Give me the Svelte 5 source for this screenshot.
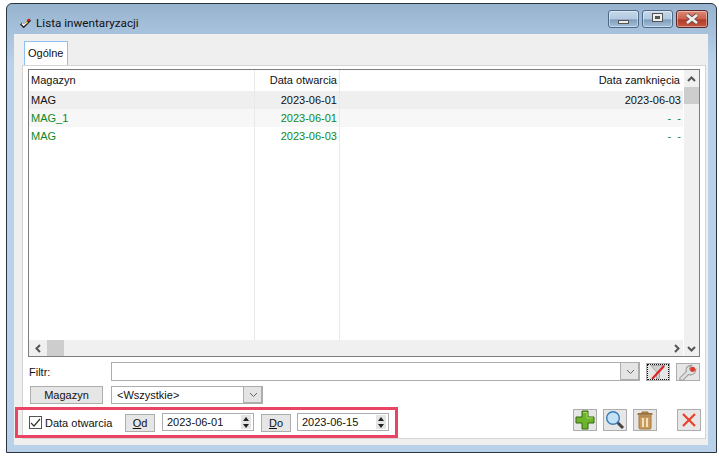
<script>
	const rows = [
		{ name: 'MAG', open: '2023-06-01', close: '2023-06-03', cls: 'selected' },
		{ name: 'MAG_1', open: '2023-06-01', close: '-  -', cls: 'green alt' },
		{ name: 'MAG', open: '2023-06-03', close: '-  -', cls: 'green' }
	];
</script>

<div class="window">
	<div class="titlebar">
		<svg class="app-icon" width="12" height="11" viewBox="0 0 13 12">
			<path d="M1 6l3 3 7-7" fill="none" stroke="#222" stroke-width="3" />
			<path d="M2 6l2 2 4-4" fill="none" stroke="#fff" stroke-width="1.500" />
			<rect x="8" y="1" width="3" height="2.500" fill="#d81818" />
			<rect x="6" y="4" width="2" height="2" fill="#e8c020" />
		</svg>
		<span class="title">Lista inwentaryzacji</span>
		<div class="controls">
			<div class="ctl">
				<span class="min-glyph"></span>
			</div>
			<div class="ctl">
				<span class="max-glyph"></span>
			</div>
			<div class="ctl close">
				<svg width="18" height="12" viewBox="0 0 18 12">
					<path d="M4 2l10 8M14 2L4 10" stroke="#6b4a48" stroke-width="4.400" />
					<path d="M4 2l10 8M14 2L4 10" stroke="#f0f0f0" stroke-width="2.800" />
				</svg>
			</div>
		</div>
	</div>

	<div class="client">
		<div class="tabs"><div class="tab">Ogólne</div></div>
		<div class="panel">
			<div class="grid">
				<div class="table">
					<div class="head">
						<div class="c1">Magazyn</div>
						<div class="c2">Data otwarcia</div>
						<div class="c3">Data zamknięcia</div>
					</div>
					{#each rows as r}
						<div class="row {r.cls}">
							<div class="c1">{r.name}</div>
							<div class="c2">{r.open}</div>
							<div class="c3">{r.close}</div>
						</div>
					{/each}
					<div class="fill">
						<div class="c1"></div>
						<div class="c2"></div>
						<div class="c3"></div>
					</div>
					<div class="hscroll">
						<svg class="arrow" width="9" height="9" viewBox="0 0 9 9"><path d="M6 1L2.500 4.500 6 8" fill="none" stroke="#555" stroke-width="2" /></svg>
						<div class="hthumb"></div>
						<svg class="arrow right" width="9" height="9" viewBox="0 0 9 9"><path d="M3 1l3.500 3.500L3 8" fill="none" stroke="#555" stroke-width="2" /></svg>
					</div>
				</div>
				<div class="vscroll">
					<svg class="arrow-v" width="9" height="9" viewBox="0 0 9 9"><path d="M1 6l3.500-3.500L8 6" fill="none" stroke="#555" stroke-width="2" /></svg>
					<div class="vthumb"></div>
					<svg class="arrow-v bottom" width="9" height="9" viewBox="0 0 9 9"><path d="M1 3l3.500 3.500L8 3" fill="none" stroke="#555" stroke-width="2" /></svg>
				</div>
			</div>

			<div class="filter-row">
				<span class="filter-label">Filtr:</span>
				<div class="combo filter-combo">
					<div class="combo-text"></div>
					<div class="combo-btn">
						<svg width="9" height="6" viewBox="0 0 9 6"><path d="M1 1l3.500 3.500L8 1" fill="none" stroke="#666" /></svg>
					</div>
				</div>
				<button class="icon-btn focus">
					<span class="dots">
						<svg width="18" height="14" viewBox="0 0 18 14">
							<path d="M2 0.500h14L10.500 7v6l-3 1V7z" fill="#cfcfcf" stroke="#a8a8a8" />
							<path d="M3 14L15 1" stroke="#e02424" stroke-width="2.200" />
						</svg>
					</span>
				</button>
				<button class="icon-btn wrench">
					<svg width="21" height="17" viewBox="0 0 20 16">
						<path d="M2 13l6-6c-1-3 1-6 5-6l-2 3c0 2 2 3 3 3l3-2c0 4-3 6-7 5l-5 5c-2 1-4 0-3-2z" fill="#e0e0e0" stroke="#999" />
						<circle cx="14" cy="5" r="2.400" fill="#e03a2a" />
					</svg>
				</button>
			</div>

			<div class="mag-row">
				<button class="btn mag-btn">Magazyn</button>
				<div class="combo mag-combo">
					<div class="combo-text">&lt;Wszystkie&gt;</div>
					<div class="combo-btn">
						<svg width="9" height="6" viewBox="0 0 9 6"><path d="M1 1l3.500 3.500L8 1" fill="none" stroke="#666" /></svg>
					</div>
				</div>
			</div>

			<div class="bottom-row">
				<div class="date-box">
					<span class="check">
						<svg width="11" height="10" viewBox="0 0 11 10"><path d="M1 5l3 3 6-7" fill="none" stroke="#333" stroke-width="1.200" /></svg>
					</span>
					<span class="check-label">Data otwarcia</span>
					<button class="btn small od"><u>O</u>d</button>
					<div class="date">
						<span>2023-06-01</span>
						<div class="spin"><i class="up"></i><i class="down"></i></div>
					</div>
					<button class="btn small do"><u>D</u>o</button>
					<div class="date">
						<span>2023-06-15</span>
						<div class="spin"><i class="up"></i><i class="down"></i></div>
					</div>
				</div>
				<div class="actions">
					<button class="icon-btn act">
						<svg width="20" height="20" viewBox="0 0 20 20">
							<path d="M7 1h6v6h6v6h-6v6H7v-6H1V7h6z" fill="#6cb52a" stroke="#35660f" />
							<path d="M8 2.500h4V8h6" fill="none" stroke="#a6dc60" />
						</svg>
					</button>
					<button class="icon-btn act">
						<svg width="20" height="20" viewBox="0 0 20 20">
							<path d="M12 12l6 6" stroke="#444" stroke-width="3" />
							<circle cx="8" cy="8" r="6.300" fill="#c4e2f7" stroke="#3a7cb5" stroke-width="1.400" />
						</svg>
					</button>
					<button class="icon-btn act">
						<svg width="18" height="20" viewBox="0 0 18 20">
							<path d="M2 3.500h14V5H2zM6 3.500V2h6v1.500" fill="#b98a4c" stroke="#9a713a" />
							<path d="M3 6h12v12a1 1 0 0 1-1 1H4a1 1 0 0 1-1-1z" fill="#c99a5b" stroke="#a07a42" />
							<rect x="6" y="8" width="2" height="9" fill="#f0e0c0" />
							<rect x="10" y="8" width="2" height="9" fill="#f0e0c0" />
						</svg>
					</button>
					<button class="icon-btn act cancel">
						<svg width="16" height="16" viewBox="0 0 16 16">
							<path d="M2 2l12 12M14 2L2 14" stroke="#e8402a" stroke-width="2.200" />
						</svg>
					</button>
				</div>
			</div>
		</div>
	</div>
</div>

<style>
	:global(body) {
		background: #fff;
		font-family: 'Liberation Sans', Arial, sans-serif;
		font-size: 11px;
		color: #111;
	}
	.window {
		box-sizing: border-box;
		width: 711px;
		height: 450px;
		margin: 3px 0 0 6px;
		border: 1px solid #2a3540;
		border-radius: 6px 6px 0 0;
		background: linear-gradient(#97b3cf 0, #b9d2ea 60px, #b9d2ea 100%);
		display: flex;
		flex-direction: column;
		padding: 0 7px 7px;
	}
	.titlebar {
		height: 30px;
		display: flex;
		align-items: center;
		flex: none;
		margin-right: 1px;
		padding-top: 8px;
		box-sizing: border-box;
	}
	.app-icon {
		margin: 0 4px 0 6px;
	}
	.title {
		font-family: Roboto, sans-serif;
		font-size: 11.7px;
		color: #111;
	}
	.controls {
		margin-left: auto;
		display: flex;
		gap: 3px;
		margin-top: -8px;
	}
	.ctl {
		box-sizing: border-box;
		width: 31px;
		height: 18px;
		border: 1px solid #4f6a88;
		border-radius: 3px;
		background: linear-gradient(#c6d8ea 0, #b2c9e0 50%, #7f9dbc 55%, #a6c0da 100%);
		display: flex;
		align-items: center;
		justify-content: center;
		box-shadow: inset 0 0 0 1px rgba(255, 255, 255, 0.4);
	}
	.close {
		width: 32px;
		border-color: #5a2a2a;
		background: linear-gradient(#dc8a78 0, #c9604c 50%, #b03a28 55%, #c65a44 100%);
	}
	.min-glyph {
		width: 9px;
		height: 2px;
		background: #eee;
		border: 1px solid #555;
		margin-top: 5px;
	}
	.max-glyph {
		box-sizing: border-box;
		width: 11px;
		height: 9px;
		border: 3px solid #eee;
		outline: 1px solid #555;
		outline-offset: -1px;
		background: #555;
		margin-top: -3px;
	}
	.client {
		flex: 1;
		background: #efefef;
		display: flex;
		flex-direction: column;
		padding: 7px 2px 6px 8px;
		margin-right: 1px;
		min-height: 0;
	}
	.tabs {
		display: flex;
		flex: none;
		padding-left: 2px;
	}
	.tab {
		height: 24px;
		line-height: 22px;
		width: 44px;
		box-sizing: border-box;
		padding-left: 3px;
		border: 1px solid #8fc1ee;
		border-bottom: none;
		background: #fff;
	}
	.panel {
		flex: 1;
		border: 1px solid #d5d5d5;
		background: #fff;
		display: flex;
		flex-direction: column;
		padding: 3px 5px 0;
		min-height: 0;
	}
	.grid {
		box-sizing: border-box;
		height: 288px;
		flex: none;
		border: 1px solid #7d7d7d;
		display: flex;
	}
	.table {
		flex: 1;
		display: flex;
		flex-direction: column;
		min-width: 0;
	}
	.head,
	.row,
	.fill {
		display: flex;
	}
	.c1 {
		box-sizing: border-box;
		width: 226px;
		padding-left: 2px;
		border-right: 1px solid #e9e9e9;
	}
	.c2 {
		box-sizing: border-box;
		width: 85px;
		text-align: right;
		padding-right: 2px;
		border-right: 1px solid #e9e9e9;
	}
	.c3 {
		flex: 1;
		text-align: right;
		padding-right: 2px;
		white-space: pre;
	}
	.head {
		height: 21px;
		line-height: 21px;
	}
	.head .c3 {
		padding-right: 3px;
	}
	.row {
		height: 18px;
		line-height: 18px;
	}
	.selected {
		background: #efefef;
	}
	.alt {
		background: #f7f7f7;
	}
	.green {
		color: #0a8a1e;
	}
	.fill {
		flex: 1;
	}
	.hscroll {
		height: 16px;
		flex: none;
		background: #f0f0f0;
		display: flex;
		align-items: center;
	}
	.arrow {
		margin-left: 5px;
	}
	.arrow.right {
		margin-left: auto;
		margin-right: 2px;
	}
	.hthumb {
		width: 17px;
		height: 16px;
		background: #cdcdcd;
		margin-left: 4px;
	}
	.vscroll {
		width: 15px;
		flex: none;
		background: #f0f0f0;
		display: flex;
		flex-direction: column;
		align-items: center;
		border-left: 1px solid #fff;
	}
	.arrow-v {
		margin-top: 5px;
		flex: none;
	}
	.arrow-v.bottom {
		margin-top: auto;
		margin-bottom: 3px;
	}
	.vthumb {
		width: 15px;
		height: 17px;
		background: #cdcdcd;
		margin-top: 3px;
	}
	.filter-row {
		display: flex;
		align-items: center;
		height: 20px;
		margin-top: 5px;
		flex: none;
	}
	.filter-label {
		width: 83px;
		padding-left: 1px;
		box-sizing: border-box;
	}
	.combo {
		box-sizing: border-box;
		border: 1px solid #adadad;
		display: flex;
		background: #fff;
	}
	.combo-text {
		flex: 1;
		padding-left: 5px;
		line-height: 16px;
	}
	.combo-btn {
		width: 18px;
		background: #e4e4e4;
		border: 1px solid #adadad;
		border-width: 0 0 0 1px;
		display: flex;
		align-items: center;
		justify-content: center;
		box-shadow: inset -1px -1px 0 #adadad;
	}
	.filter-combo {
		width: 531px;
		height: 19px;
		align-self: flex-start;
	}
	.icon-btn {
		box-sizing: border-box;
		padding: 0;
		margin: 0;
		background: #e6e6e6;
		border: 1px solid #adadad;
		display: flex;
		align-items: center;
		justify-content: center;
	}
	.filter-row .icon-btn {
		width: 24px;
		height: 18px;
		margin-left: 6px;
	}
	.dots {
		display: flex;
		align-items: center;
		justify-content: center;
		box-sizing: border-box;
		width: 22px;
		height: 16px;
		border: 1px dotted #111;
	}
	.mag-row {
		display: flex;
		align-items: center;
		height: 18px;
		margin-top: 4px;
		flex: none;
	}
	.btn {
		box-sizing: border-box;
		font: inherit;
		color: inherit;
		background: #e6e6e6;
		border: 1px solid #adadad;
		padding: 0;
	}
	.mag-btn {
		width: 73px;
		height: 18px;
		margin-left: 2px;
		margin-right: 8px;
	}
	.mag-combo {
		width: 152px;
		height: 18px;
	}
	.bottom-row {
		display: flex;
		margin-top: 3px;
		margin-left: -13px;
		flex: none;
		align-items: flex-start;
	}
	.date-box {
		box-sizing: border-box;
		width: 383px;
		height: 31px;
		border: 3px solid #ea4465;
		display: flex;
		align-items: center;
		padding-left: 11px;
		flex: none;
	}
	.check {
		box-sizing: border-box;
		width: 13px;
		height: 13px;
		border: 1px solid #555;
		display: flex;
		align-items: center;
		justify-content: center;
		background: #fff;
	}
	.check-label {
		margin-left: 3px;
		width: 80px;
	}
	.small {
		width: 30px;
		height: 18px;
	}
	.od {
		margin-right: 7px;
	}
	.do {
		margin: 0 6px 0 7px;
	}
	.date {
		box-sizing: border-box;
		width: 92px;
		height: 18px;
		border: 1px solid #adadad;
		display: flex;
		align-items: center;
		padding-left: 4px;
		justify-content: space-between;
		padding-right: 2px;
		margin-top: -1px;
	}
	.spin {
		width: 10px;
		height: 14px;
		background: #e4e4e4;
		display: flex;
		flex-direction: column;
		align-items: center;
		justify-content: space-around;
	}
	.up,
	.down {
		width: 0;
		height: 0;
		border-left: 3px solid transparent;
		border-right: 3px solid transparent;
	}
	.up {
		border-bottom: 4px solid #222;
	}
	.down {
		border-top: 4px solid #222;
	}
	.actions {
		margin-left: auto;
		display: flex;
		margin-top: 2px;
		margin-right: -1px;
	}
	.act {
		width: 24px;
		height: 22px;
		margin-right: 6px;
	}
	.cancel {
		margin-left: 14px;
		margin-right: 0;
	}
</style>
